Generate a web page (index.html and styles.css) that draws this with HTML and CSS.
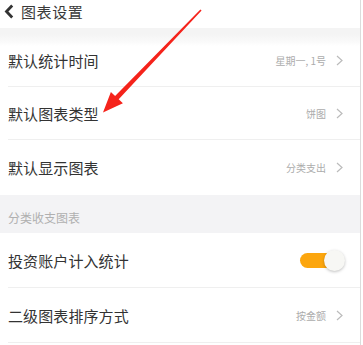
FILE: index.html
```html
<!DOCTYPE html>
<html lang="zh">
<head>
<meta charset="utf-8">
<link rel="stylesheet" href="styles.css">
</head>
<body>
<div class="screen">
  <div class="panel">
    <header class="header">
      <svg class="back" width="10" height="15" viewBox="0 0 10 15"><polyline points="8.2,1.5 2.5,7.5 8.2,13.5" fill="none" stroke="#333" stroke-width="2.8" stroke-linejoin="miter"/></svg>
      <span class="title">图表设置</span>
    </header>
    <div class="spacer"></div>
    <div class="row row-first">
      <div class="row-inner">
        <span class="label">默认统计时间</span>
        <span class="value">星期一, 1号</span>
        <svg class="chev" width="7" height="11" viewBox="0 0 7 11"><polyline points="1,1 6,5.5 1,10" fill="none" stroke="#bbb" stroke-width="1.2"/></svg>
      </div>
    </div>
    <div class="row">
      <div class="row-inner">
        <span class="label">默认图表类型</span>
        <span class="value">饼图</span>
        <svg class="chev" width="7" height="11" viewBox="0 0 7 11"><polyline points="1,1 6,5.5 1,10" fill="none" stroke="#bbb" stroke-width="1.2"/></svg>
      </div>
    </div>
    <div class="row row-tall">
      <div class="row-inner no-border">
        <span class="label">默认显示图表</span>
        <span class="value">分类支出</span>
        <svg class="chev" width="7" height="11" viewBox="0 0 7 11"><polyline points="1,1 6,5.5 1,10" fill="none" stroke="#bbb" stroke-width="1.2"/></svg>
      </div>
    </div>
    <div class="section">分类收支图表</div>
    <div class="row row-big">
      <div class="row-inner">
        <span class="label">投资账户计入统计</span>
        <span class="toggle"><span class="knob"></span></span>
      </div>
    </div>
    <div class="row row-big">
      <div class="row-inner">
        <span class="label">二级图表排序方式</span>
        <span class="value">按金额</span>
        <svg class="chev" width="7" height="11" viewBox="0 0 7 11"><polyline points="1,1 6,5.5 1,10" fill="none" stroke="#bbb" stroke-width="1.2"/></svg>
      </div>
    </div>
  </div>
  <svg class="annot" width="363" height="345" viewBox="0 0 363 345">
    <polygon points="200.4,9.4 201.6,10.6 118.7,99.3 122.9,103.3 103,112.5 110.9,91.9 115.1,95.9" fill="#f5231b"/>
  </svg>
</div>
</body>
</html>
```

FILE: styles.css
```css
* { box-sizing: border-box; }
html, body { margin: 0; padding: 0; background: #fff; }
body {
  font-family: "Noto Sans CJK SC", "Noto Sans", sans-serif;
  width: 363px;
  height: 345px;
  overflow: hidden;
}
.screen {
  position: relative;
  width: 363px;
  height: 345px;
  background: #fff;
}
.panel {
  width: 361px;
  height: 345px;
  border-right: 1px solid #dcdcdc;
  display: flex;
  flex-direction: column;
}
.header {
  height: 28px;
  display: flex;
  align-items: center;
  padding: 0 0 6px 4px;
  gap: 7px;
  background: #fff;
}
.back { display: block; }
.title {
  font-size: 15px;
  color: #3a3a3a;
  letter-spacing: 0.6px;
  line-height: 1;
}
.spacer {
  height: 6px;
  background: #f4f4f4;
}
.row {
  height: 53px;
  padding-left: 8px;
  background: #fff;
}
.row-first {
  background: linear-gradient(#f4f4f4, #fafafa 8px, #fff 12px);
}
.row-tall { height: 55px; }
.row-big { height: 55px; }
.row-inner {
  height: 100%;
  display: flex;
  align-items: center;
  border-bottom: 1px solid #efefef;
  padding-right: 17px;
}
.row-inner.no-border { border-bottom: none; }
.label {
  font-size: 15px;
  color: #333;
  flex: 1;
  letter-spacing: 0.1px;
}
.value {
  font-size: 10px;
  color: #acacac;
  margin-right: 10px;
}
.chev { display: block; }
.section {
  height: 38px;
  background: #f3f3f5;
  font-size: 12px;
  color: #b0b0b0;
  padding: 7px 0 0 8px;
  display: flex;
  align-items: center;
}
.toggle {
  position: relative;
  width: 40px;
  height: 15px;
  border-radius: 8px;
  background: #fca60e;
  margin-right: 3px;
}
.knob {
  position: absolute;
  right: -5px;
  top: -3px;
  width: 21px;
  height: 21px;
  border-radius: 50%;
  background: #f7f7f4;
  box-shadow: 0 1px 3px rgba(0,0,0,0.25);
}
.annot {
  position: absolute;
  left: 0;
  top: 0;
  pointer-events: none;
}
```
